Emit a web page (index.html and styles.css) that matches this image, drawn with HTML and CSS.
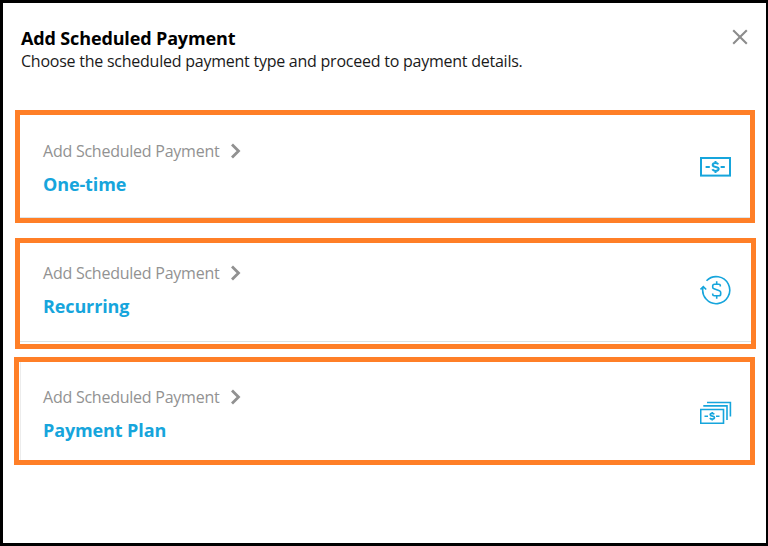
FILE: index.html
```html
<!DOCTYPE html>
<html lang="en">
<head>
<meta charset="utf-8">
<title>Add Scheduled Payment</title>
<link rel="stylesheet" href="styles.css">
</head>
<body>
<main class="dialog">
  <header class="header">
    <div>
      <h1 class="title">Add Scheduled Payment</h1>
      <p class="subtitle">Choose the scheduled payment type and proceed to payment details.</p>
    </div>
    <svg class="close" viewBox="0 0 16 16" aria-label="Close"><path d="M1.2 1.2 14.8 14.8M14.8 1.2 1.2 14.8"/></svg>
  </header>
  <section class="options">
    <a class="card card-once">
      <div class="card-text">
        <div class="label">Add Scheduled Payment <svg class="chevron" viewBox="0 0 11 16"><path d="M2 1.5 8.5 8 2 14.5"/></svg></div>
        <div class="name">One-time</div>
      </div>
      <svg class="icon" viewBox="0 0 32 32">
        <rect class="thick" x="1" y="7" width="29" height="17.6"/>
        <path class="thick" d="M5.6 16h4.2M20.6 16h4.2M18.3 13.4c-.5-1-1.4-1.4-2.8-1.4-1.7 0-2.8.7-2.8 1.9 0 2.9 6 1.1 6 3.9 0 1.4-1.3 2.1-3.1 2.1-1.6 0-2.7-.5-3.3-1.6M15.5 10v2M15.5 19.9v2"/>
      </svg>
    </a>
    <a class="card card-recurring">
      <div class="card-text">
        <div class="label">Add Scheduled Payment <svg class="chevron" viewBox="0 0 11 16"><path d="M2 1.5 8.5 8 2 14.5"/></svg></div>
        <div class="name">Recurring</div>
      </div>
      <svg class="icon" viewBox="0 0 32 32">
        <path d="M6.5 6.8A13.5 13.5 0 1 1 3.1 13M.5 15.5 3.3 12.6 6.2 15.5"/>
        <path d="M20.3 12.4V11.5Q20.3 10.2 19 10.2H14.5Q12.7 10.2 12.7 12V13.2Q12.7 14.4 14 14.8L19.4 16.8Q20.7 17.3 20.7 18.5V20Q20.7 21.8 18.9 21.8H14.2Q12.7 21.8 12.7 20.3V19.4M16.7 7.2v3M16.7 21.8v3"/>
      </svg>
    </a>
    <a class="card card-plan">
      <div class="card-text">
        <div class="label">Add Scheduled Payment <svg class="chevron" viewBox="0 0 11 16"><path d="M2 1.5 8.5 8 2 14.5"/></svg></div>
        <div class="name">Payment Plan</div>
      </div>
      <svg class="icon" viewBox="0 0 32 32">
        <path d="M.7 12.5H23.5V26.3H.7ZM3.3 8.9H27V23M7 5.5H30.4V19.5"/>
        <path d="M4.5 19.3h3.5M16 19.3h3.5M14.2 17.4c-.4-.7-1-1-2-1-1.2 0-2 .5-2 1.3 0 2.1 4.3.8 4.3 2.9 0 1-1 1.5-2.2 1.5-1.1 0-2-.4-2.4-1.1M12.2 15v1.4M12.2 22.1v1.4"/>
      </svg>
    </a>
  </section>
</main>
</body>
</html>
```
FILE: styles.css
```css
* { box-sizing: border-box; }
body { margin: 0; font-family: "Open Sans", "Noto Sans", sans-serif; background: #fff; }
.dialog {
  height: 546px;
  border: solid #000;
  border-width: 3px 2px 3px 3px;
  padding: 22px 11px 0;
}
.header {
  height: 85px;
  display: flex;
  justify-content: space-between;
  padding: 0 7px;
}
.title { margin: 0; font-size: 18px; line-height: 26px; font-weight: 700; letter-spacing: -.14px; color: #000; white-space: nowrap; }
.subtitle { margin: -1px 0 0; font-size: 16px; line-height: 22px; letter-spacing: -.24px; color: #1a1a1a; white-space: nowrap; }
.close { width: 16px; height: 16px; margin-top: 4px; fill: none; stroke: #8c8c8c; stroke-width: 2.1; }
.card {
  display: flex;
  justify-content: space-between;
  border: 5px solid #ff7f27;
  color: #16a5dc;
}
.card-once { height: 113px; margin: 0 0 15px 1px; padding: 25px 18px 0 23px; width: 740px; }
.card-recurring { height: 111px; margin: 0 0 8px 1px; padding: 19px 19px 0 23px; width: 741px; }
.card-plan { height: 108px; padding: 24px 18px 0 24px; width: 741px; }
.card-once { box-shadow: inset 0 -1px #dbe5ec; }
.card-recurring { box-shadow: inset 0 -2px #fff, inset 0 -3px #dce3e3; }
.card-plan { box-shadow: inset 1px 0 #fff, inset 2px 0 #ececec; }
.label { display: flex; align-items: center; gap: 11px; font-size: 16px; line-height: 22px; letter-spacing: -.24px; color: #929292; white-space: nowrap; }
.chevron { width: 11px; height: 16px; fill: none; stroke: #919191; stroke-width: 2.8; }
.name { margin-top: 10px; font-size: 18px; line-height: 25px; font-weight: 700; letter-spacing: -.12px; white-space: nowrap; }
.icon { width: 32px; height: 32px; margin-top: 11px; fill: none; stroke: currentColor; stroke-width: 1.6; }
.card-recurring .icon { margin-top: 12px; }
.thick { stroke-width: 2; }
```
